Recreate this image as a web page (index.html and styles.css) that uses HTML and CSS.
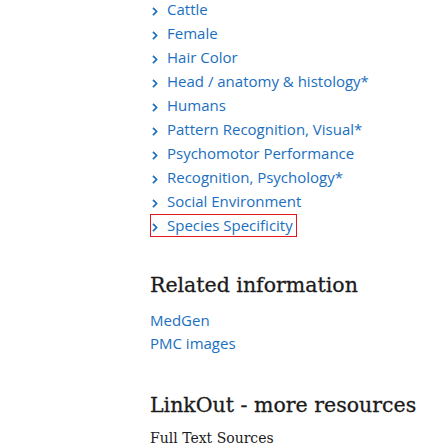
FILE: index.html
```html
<!DOCTYPE html>
<html>
<head>
<meta charset="utf-8">
<link rel="stylesheet" href="styles.css">
</head>
<body>
<div class="page">
  <ul class="terms">
    <li class="term"><svg class="chev" viewBox="0 0 6 9"><path d="M1 0.8 L4.6 4.5 L1 8.2"/></svg><a class="term-link" href="#">Cattle</a></li>
    <li class="term"><svg class="chev" viewBox="0 0 6 9"><path d="M1 0.8 L4.6 4.5 L1 8.2"/></svg><a class="term-link" href="#">Female</a></li>
    <li class="term"><svg class="chev" viewBox="0 0 6 9"><path d="M1 0.8 L4.6 4.5 L1 8.2"/></svg><a class="term-link" href="#">Hair Color</a></li>
    <li class="term"><svg class="chev" viewBox="0 0 6 9"><path d="M1 0.8 L4.6 4.5 L1 8.2"/></svg><a class="term-link" href="#">Head / anatomy &amp; histology*</a></li>
    <li class="term"><svg class="chev" viewBox="0 0 6 9"><path d="M1 0.8 L4.6 4.5 L1 8.2"/></svg><a class="term-link" href="#">Humans</a></li>
    <li class="term"><svg class="chev" viewBox="0 0 6 9"><path d="M1 0.8 L4.6 4.5 L1 8.2"/></svg><a class="term-link" href="#">Pattern Recognition, Visual*</a></li>
    <li class="term"><svg class="chev" viewBox="0 0 6 9"><path d="M1 0.8 L4.6 4.5 L1 8.2"/></svg><a class="term-link" href="#">Psychomotor Performance</a></li>
    <li class="term"><svg class="chev" viewBox="0 0 6 9"><path d="M1 0.8 L4.6 4.5 L1 8.2"/></svg><a class="term-link" href="#">Recognition, Psychology*</a></li>
    <li class="term"><svg class="chev" viewBox="0 0 6 9"><path d="M1 0.8 L4.6 4.5 L1 8.2"/></svg><a class="term-link" href="#">Social Environment</a></li>
    <li class="term"><span class="marked"><svg class="chev" viewBox="0 0 6 9"><path d="M1 0.8 L4.6 4.5 L1 8.2"/></svg><a class="term-link" href="#">Species Specificity</a></span></li>
  </ul>

  <section class="related">
    <h2 class="heading">Related information</h2>
    <ul class="links">
      <li><a class="link" href="#">MedGen</a></li>
      <li><a class="link" href="#">PMC images</a></li>
    </ul>
  </section>

  <section class="linkout">
    <h2 class="heading">LinkOut - more resources</h2>
    <h3 class="subheading">Full Text Sources</h3>
  </section>
</div>
</body>
</html>
```
FILE: styles.css
```css
html, body {
  margin: 0;
  padding: 0;
  background: #ffffff;
}
.page {
  padding-left: 150px;
  font-family: "Open Sans", "Noto Sans", sans-serif;
  color: #212121;
}
.terms {
  list-style: none;
  margin: -3px 0 0 0;
  padding: 0;
}
.term {
  height: 24px;
  line-height: 24px;
  font-size: 15px;
  color: #1a6fc0;
  padding-left: 2px;
  white-space: nowrap;
}
.term-link {
  color: #1a6fc0;
  text-decoration: none;
  margin-left: 9px;
}
.chev {
  display: inline-block;
  width: 6px;
  height: 9px;
  vertical-align: -0.5px;
}
.chev path {
  fill: none;
  stroke: #1a6fc0;
  stroke-width: 1.7;
}
.marked {
  display: inline-block;
  height: 21px;
  line-height: 21px;
  margin-left: -1px;
  padding: 0 3px 0 1px;
  box-shadow: 0 0 0 1px #e8141c;
}
.heading {
  font-family: "DejaVu Serif", serif;
  font-weight: normal;
  font-size: 20.5px;
  line-height: 28px;
  margin: 0;
  color: #1b1b1b;
  -webkit-text-stroke: 0.3px #1b1b1b;
}
.related {
  margin-top: 34px;
}
.links {
  list-style: none;
  margin: 10px 0 0 0;
  padding: 0;
}
.links li {
  height: 23px;
  line-height: 23px;
  font-size: 15px;
}
.link {
  color: #1a6fc0;
  text-decoration: none;
}
.linkout {
  margin-top: 36px;
}
.subheading {
  font-family: "DejaVu Serif", serif;
  font-weight: normal;
  font-size: 14px;
  margin: 11px 0 0 0;
  color: #1b1b1b;
}
```
